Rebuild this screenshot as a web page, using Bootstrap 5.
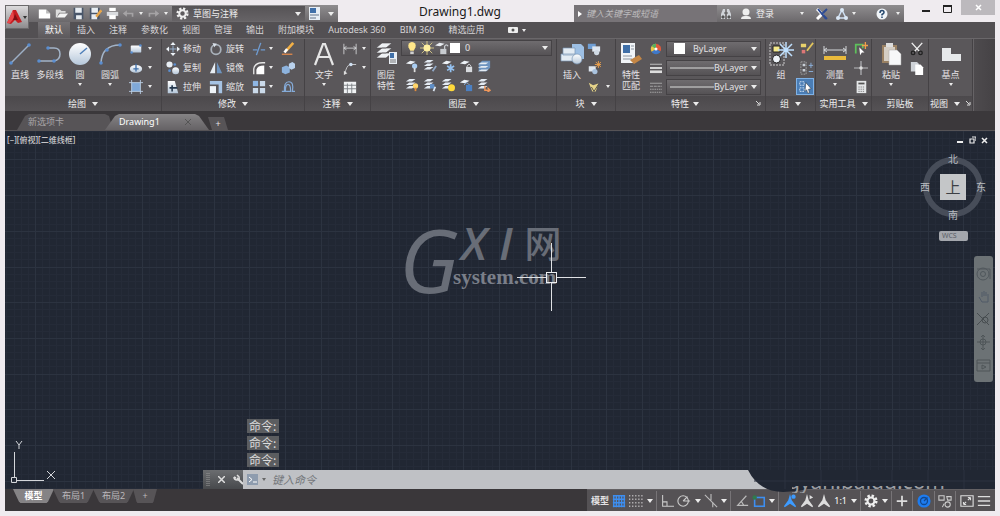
<!DOCTYPE html>
<html lang="zh-CN">
<head>
<meta charset="utf-8">
<meta name="viewport" content="width=device-width, initial-scale=1">
<title>Drawing1.dwg</title>
<link href="https://cdn.jsdelivr.net/npm/bootstrap@5.3.0/dist/css/bootstrap.min.css" rel="stylesheet">
<style>
:root{--ui:"Noto Sans","Noto Sans CJK SC",sans-serif}
body{background:#efebef;font:9px/12px var(--ui);color:#e4e2e4;padding:5px;overflow:hidden}
button,select,input{font:inherit;color:inherit;background:none;border:0;padding:0;margin:0}
svg{display:block;flex:none}
.ic{width:14px;height:14px}
.crt{width:0;height:0;border:2px solid transparent;border-top:3px solid #ececec;border-bottom:0;flex:none}
.crt-l{border-width:3px;border-top-width:4px;border-bottom:0}
/* title bar */
.titlebar{height:17px;color:#111}
.appbtn{width:24px;height:24px;left:0;top:0;z-index:3;background:linear-gradient(#dcdadc,#8d8b8d);border:1px solid #6b696b}
.qat{width:333px;padding-left:29px;background:linear-gradient(#8f8d8f,#6b686b);color:#eee}
.qat .ic{width:13px;height:13px}
.workspace{width:133px;height:15px;background:linear-gradient(#565356,#666366);padding:0 4px}
.workspace select,.combo select{appearance:none;min-width:0}
.doctitle{font-size:12px;line-height:14px;color:#1a1a1a}
.searchwrap{width:143px;background:#777377}
.searchwrap input{font-style:italic;color:#bdbbbd;min-width:0}
.searchwrap input::placeholder,.cmdinput::placeholder{color:inherit;opacity:1}
.signin{width:187px;background:linear-gradient(#8f8d8f,#6b686b);color:#eee;padding-left:3px}
.winctl{width:91px}
.closebtn{width:34px;height:15px;background:#bcb9bd;margin-top:-5px}
/* ribbon */
.rtabs{height:16px;background:#535053;padding-left:33px}
.rtabs a{color:#d6d4d6;text-decoration:none;padding:0 7px;line-height:16px}
.rtabs a.on{background:linear-gradient(#757275,#5c595c);color:#fff}
.ribbon{height:73px;background:linear-gradient(90deg,#5a575a 95%,#454245);border-top:1px solid #6a676a}
.rpanel{border-right:1px solid #454245;box-shadow:1px 0 #666366;background:#5a575a;flex:none}
.rbody{height:57px}
.rfoot{height:15px;background:linear-gradient(#4c494c,#555255);gap:6px;color:#eee}
.big{width:30px;padding-top:2px;display:flex;flex-direction:column;align-items:center;line-height:11px}
.big svg{width:28px;height:26px;margin-bottom:2px}
.big .crt{margin-top:3px}
.trow{height:19px;display:flex;align-items:center;gap:5px;white-space:nowrap}
.tight{gap:8px}
.tight .trow{gap:3px}
.combo{height:16px;background:linear-gradient(#6f6c6f,#555255);border:1px solid #454245;padding:0 3px}
.layers{gap:1px;margin-top:1px}
.layers select{margin-left:4px}
.props .ic{width:12px}
.hot{width:18px;height:17px;background:#4a7db5;border:1px solid #7fb2e6;display:grid;place-items:center}
/* document tabs */
.dtabs{height:20px;background:#3b383b;padding:3px 0 0 12px;border-bottom:1px solid #565356}
.dtab{width:96px;clip-path:polygon(0 100%,8px 12%,12px 0,88px 0,92px 12%,100% 100%);background:#575457;color:#a9a6a9;text-align:left;padding-left:11px}
.dtab.on{width:104px;margin-left:-8px;background:linear-gradient(#858385,#656265);color:#fff;padding:0 18px 0 14px;clip-path:polygon(0 100%,10px 12%,14px 0,90px 0,94px 12%,100% 100%)}
.dplus{width:20px;margin:3px 0 0 -1px;clip-path:polygon(0 0,80% 0,100% 100%,20% 100%);background:#575457}
/* drawing area */
.model{background:#212733;min-height:0}
.abs{position:absolute}
.vlabel{left:2px;top:3px;font-size:8px}
.vctl{right:7px;top:5px;gap:5px}
.mark-g,.mark-x,.mark-s{color:#686d77;line-height:1;white-space:nowrap}
.mark-g{font:italic 500 88px/92px "Open Sans","Noto Sans",sans-serif;left:394px;top:82px}
.mark-x{font:italic 600 46px/46px "Open Sans","Noto Sans",sans-serif;left:456px;top:88px;gap:12px}
.mark-x b{font:500 37px/46px "Noto Sans CJK SC",sans-serif}
.mark-s{font:bold 21px/22px "Liberation Serif",serif;left:448px;top:135px;color:#7a7f89}
.cube{right:9px;top:22px;width:66px;height:70px}
.cube text{font-size:10px;fill:#b9bcc0;text-anchor:middle}
.cube text.up{font-size:15px;fill:#3c3f44}
.wcs{right:27px;top:100px;width:29px;height:10px;background:#a4a7ad;border-radius:2px;color:#5b5e66;font-size:7px;line-height:10px;text-align:left;padding-left:3px}
.viewbar{right:2px;top:125px;width:19px;height:126px;background:#6c7275;border-radius:3px;padding:10px 2px}
.hist{left:242px;bottom:22px;gap:3px;font:12px/14px "Noto Sans CJK SC",sans-serif;color:#dcdcdc}
.hist span{background:#5b5d60;padding:0 3px 0 2px;white-space:nowrap}
.cmdbar{left:198px;right:0;bottom:0;height:19px}
.cmdgrip{width:40px;background:linear-gradient(#6b6d70,#47494c);gap:8px;padding-left:3px}
.cmdfield{width:530px;background:#bfc1c5;padding-left:4px;gap:4px}
.cmdinput{font-size:11px;font-style:italic;color:#74777b;margin-left:2px}
.blob{left:743px;right:0;bottom:-3px;height:22px;z-index:2}
.site{left:787px;right:40px;bottom:-4px;height:7px;overflow:hidden;z-index:3}
.site span{position:absolute;right:10px;bottom:-2px;font:21px/28px "Noto Sans",sans-serif;color:#9d9fa3;white-space:nowrap}
/* status bar */
.sbar{height:22px;background:#3a373a}
.ltab{height:14px;width:41px;margin-right:-1px;background:#575457;color:#bbb8bb;clip-path:polygon(0 0,100% 0,86% 88%,82% 100%,18% 100%,14% 88%)}
.ltab.on{background:#858385;color:#fff;font-weight:700}
.ltab.sm{width:24px}
.stat{width:408px;background:#555255;border-top:1px solid #646164}
.stat svg{width:14px;height:14px}
.stat>*{flex:none}
.sep{width:1px;height:20px;background:#777477}
</style>
</head>
<body class="vh-100 d-flex flex-column">

<svg width="0" height="0" class="position-absolute" aria-hidden="true">
 <defs>
  <linearGradient id="gw" x2="0" y2="1"><stop stop-color="#fff"/><stop offset="1" stop-color="#b5c7da"/></linearGradient>
  <symbol id="rect" viewBox="0 0 16 16"><rect x="2" y="4" width="12" height="8" rx="1" fill="url(#gw)"/><circle cx="3" cy="12" r="1.500" fill="#5b8ed0"/><circle cx="13" cy="4" r="1.500" fill="#5b8ed0"/></symbol>
  <symbol id="ellipse" viewBox="0 0 16 16"><ellipse cx="8" cy="9" rx="7" ry="4.500" fill="url(#gw)"/><path d="M8 3v9M5 9h6" stroke="#3d6ea8" stroke-width="1.500"/></symbol>
  <symbol id="hatch" viewBox="0 0 16 16"><rect x="3" y="3" width="10" height="10" fill="#7fa9d8"/><path d="M3 0v16M13 0v16M0 3h16M0 13h16" stroke="#bcd0e6"/></symbol>
  <symbol id="move" viewBox="0 0 16 16"><path d="M8 0l3 3.500H5zM8 16l3-3.500H5zM0 8l3.500-3v6zM16 8l-3.500-3v6z" fill="#eef3f8"/><path d="M8 4v8M4 8h8" stroke="#9bb8d8"/></symbol>
  <symbol id="rot" viewBox="0 0 16 16"><circle cx="8" cy="8.500" r="5.500" fill="none" stroke="#a9b1ba" stroke-width="2"/><path d="M4 1l5 1-3 4z" fill="#d9e0e8"/></symbol>
  <symbol id="trim" viewBox="0 0 16 16"><path d="M1 9h5M10 9h5M10 1L5 15" stroke="#6f9bd0" stroke-width="1.600"/></symbol>
  <symbol id="erase" viewBox="0 0 16 16"><path d="M14 1L6 10" stroke="#f2b046" stroke-width="3"/><path d="M7 8l-3 4" stroke="#fff" stroke-width="3"/><path d="M1 14h12" stroke="#e0884a" stroke-width="1.500"/></symbol>
  <symbol id="copy" viewBox="0 0 16 16"><circle cx="4" cy="4" r="3.500" fill="#e8eef4"/><circle cx="11" cy="11" r="4" fill="url(#gw)"/><circle cx="10" cy="4" r="1.500" fill="#5b8ed0"/><circle cx="4" cy="11" r="1.500" fill="#5b8ed0"/></symbol>
  <symbol id="mirror" viewBox="0 0 16 16"><path d="M7 1v13H1z" fill="#e8eef4"/><path d="M9 1v13h6z" fill="#6e94bf"/></symbol>
  <symbol id="fillet" viewBox="0 0 16 16"><path d="M2 15V9q1-7 10-7h3" stroke="#e6e6e6" fill="none" stroke-width="1.500"/><path d="M5 15V10q1-5 9-5v10z" fill="#fff"/></symbol>
  <symbol id="explode" viewBox="0 0 16 16"><path d="M1 7l5-2 4 2v6l-5 2-4-2z" fill="#8db3de"/><path d="M9 3l4-2 3 2v5l-4 2-3-2z" fill="#b9d1ec"/></symbol>
  <symbol id="stretch" viewBox="0 0 16 16"><path d="M2 1h8l4 14H2z" fill="url(#gw)"/><path d="M7 6v7M4 9h9" stroke="#23364c" stroke-width="1.800"/></symbol>
  <symbol id="scale" viewBox="0 0 16 16"><path d="M1 1h14v14h-4V5H1z" fill="#a6c3e4"/><rect x="1" y="7" width="7" height="8" fill="#eef3f8"/></symbol>
  <symbol id="array" viewBox="0 0 16 16"><path d="M1 1h6v6H1z" fill="#8eb6e4"/><path d="M9 1h6v6H9zM1 9h6v6H1zM9 9h6v6H9z" fill="#cbdaea"/></symbol>
  <symbol id="offset" viewBox="0 0 16 16"><path d="M1 13h3q-1-11 5-11t4 11h3M5 13q0-8 3-8t3 8z" fill="none" stroke="#85abd8" stroke-width="1.400"/></symbol>
  <symbol id="dim" viewBox="0 0 16 16"><path d="M1 2v12M15 2v12M1 7h14M4 5L1 7l3 2M12 5l3 2-3 2" stroke="#d2d4d6" fill="none"/></symbol>
  <symbol id="leader" viewBox="0 0 16 16"><path d="M2 15Q4 5 8 4h7" stroke="#d2d4d6" fill="none"/><circle cx="9" cy="4" r="2" fill="#cfe0f2"/><path d="M1 11v5l4-2z" fill="#ddd"/></symbol>
  <symbol id="tbl" viewBox="0 0 16 16"><rect x="1" y="2" width="14" height="13" fill="#f0f2f4"/><path d="M1 6h14M1 10h14M5 4v11M10 4v11" stroke="#777b80"/></symbol>
  <symbol id="bulb" viewBox="0 0 16 16"><path d="M8 1a4.500 4.500 0 014 6l-2 4H6L4 7a4.500 4.500 0 014-6z" fill="#ffe68a"/><path d="M6 12h4v3H6z" fill="#cfcfcf"/></symbol>
  <symbol id="sun" viewBox="0 0 16 16"><path d="M8 0v16M0 8h16M2 2l12 12M14 2L2 14" stroke="#dccd8a"/><circle cx="8" cy="8" r="4" fill="#fff0a0"/></symbol>
  <symbol id="lock" viewBox="0 0 16 16"><path d="M0 5l5-3 6 1-5 3z" fill="#e9edf2"/><rect x="6" y="9" width="7" height="6" fill="#c7cbd0"/><path d="M11 9V6q2-3 4 0" fill="none" stroke="#c7cbd0" stroke-width="1.500"/></symbol>
  <symbol id="sheet" viewBox="0 0 16 16"><path d="M1 5l5-3 6 1-5 3z" fill="#edf2f7"/></symbol>
  <symbol id="stack" viewBox="0 0 16 16"><path d="M1 4l4-3h7L8 4zM1 8l4-3h7L8 8zM1 12l4-3h7l-4 3z" fill="#e4ebf3"/></symbol>
  <symbol id="l1" viewBox="0 0 16 16"><use href="#sheet"/><circle cx="11" cy="8" r="3" fill="#a9cdf2"/><path d="M11 10v5" stroke="#ddd" stroke-width="2"/></symbol>
  <symbol id="l2" viewBox="0 0 16 16"><use href="#stack"/><path d="M15 8l-4 6" stroke="#90a8c6" stroke-width="2"/></symbol>
  <symbol id="l3" viewBox="0 0 16 16"><use href="#sheet"/><path d="M11 6v9M7 8l8 5M15 8l-8 5" stroke="#94c1f0" stroke-width="2"/></symbol>
  <symbol id="l4" viewBox="0 0 16 16"><use href="#sheet"/><rect x="8" y="9" width="7" height="6" fill="#d8dade"/><path d="M9 9q2.500-6 5 0" fill="none" stroke="#d8dade"/></symbol>
  <symbol id="l5" viewBox="0 0 16 16"><path d="M2 5l4-3h9v8l-4 4H2z" fill="#6d93bf"/><path d="M1 6l4-2h8l-3 2zM1 10l4-2h8l-3 2zM1 14l4-2h8l-3 2z" fill="#e4ebf3"/></symbol>
  <symbol id="l6" viewBox="0 0 16 16"><use href="#stack"/><circle cx="12" cy="9" r="3" fill="#ffd56b"/><path d="M12 11v4" stroke="#e08c3c" stroke-width="2"/></symbol>
  <symbol id="l7" viewBox="0 0 16 16"><use href="#stack"/><path d="M8 7h5v5H8z" fill="#5f8ec6"/><path d="M14 10l-2 5" stroke="#d9e4f0" stroke-width="2"/></symbol>
  <symbol id="l8" viewBox="0 0 16 16"><use href="#stack"/><circle cx="12" cy="11" r="4" fill="#ffd93b"/></symbol>
  <symbol id="l9" viewBox="0 0 16 16"><use href="#sheet"/><rect x="8" y="8" width="7" height="7" fill="#4c80c2"/><path d="M6 8q2-5 6 0" fill="none" stroke="#8fb6e4"/></symbol>
  <symbol id="l10" viewBox="0 0 16 16"><use href="#stack"/><path d="M9 9v5h6M12 11l3 3-3 2" stroke="#f0975a" stroke-width="1.600" fill="none"/></symbol>
  <symbol id="blk1" viewBox="0 0 16 16"><path d="M1 2h9v6H1z" fill="#6f9ed4"/><path d="M6 5h9v6H6z" fill="#dfe7f0"/><circle cx="11" cy="12" r="3" fill="#d0dae5"/></symbol>
  <symbol id="blk2" viewBox="0 0 16 16"><path d="M2 6h8v6H2z" fill="#dfe7f0"/><circle cx="9" cy="12" r="3" fill="#a9c2de"/><path d="M13 0v8M9 4h7M10 1l6 6M16 1l-6 6" stroke="#f5a54a"/></symbol>
  <symbol id="blk3" viewBox="0 0 16 16"><path d="M2 3l5 3 6-2-3 9H6z" fill="#e6d48a"/><path d="M5 8l3 5 5-8" stroke="#444" fill="none"/></symbol>
  <symbol id="wheel" viewBox="0 0 16 16"><path d="M8 8V1a7 7 0 016 10z" fill="#e05a3c"/><path d="M8 8l6 3.500A7 7 0 012 11.500z" fill="#3f78c9"/><path d="M8 8l-6 3.500A7 7 0 018 1z" fill="#e9c84a"/><path d="M8 8L2 4a7 7 0 016-3z" fill="#58b060"/><circle cx="8" cy="8" r="2" fill="#fff"/></symbol>
  <symbol id="lw" viewBox="0 0 16 16"><path d="M0 3h16" stroke="#ddd"/><path d="M0 8h16" stroke="#ddd" stroke-width="2.500"/><path d="M0 13h16" stroke="#ddd" stroke-width="3.500"/></symbol>
  <symbol id="lt" viewBox="0 0 16 16"><path d="M0 3h16" stroke="#bbb"/><path d="M0 7h16" stroke="#bbb" stroke-dasharray="4 1"/><path d="M0 11h16M0 15h16" stroke="#bbb" stroke-dasharray="2 1"/></symbol>
  <symbol id="g1" viewBox="0 0 16 16"><path d="M1 2h6v4H1z" fill="#e9d26b"/><path d="M2 9h4v4H2z" fill="#d77"/><path d="M15 1L8 10" stroke="#e0c45c" stroke-width="2"/></symbol>
  <symbol id="g2" viewBox="0 0 16 16"><path d="M1 1h6v14H1z" fill="none" stroke="#aaa" stroke-dasharray="2 1"/><path d="M3 3h3v3H3zM3 9h3v3H3z" fill="#c9cfd6"/><path d="M10 5h5M12.500 2v6M10 12h5" stroke="#8fb6e4"/></symbol>
  <symbol id="g3" viewBox="0 0 16 16"><path d="M2 2h5v4H2zM2 9h5v4H2z" fill="none" stroke="#d9e8f8" stroke-dasharray="2 1"/><path d="M9 3l6 7-3 .5 1 4-2 .5-1-4-2 2z" fill="#fff" stroke="#222" stroke-width=".5"/></symbol>
  <symbol id="u1" viewBox="0 0 16 16"><path d="M2 13V3h8v4" fill="none" stroke="#5ec15c" stroke-width="2"/><path d="M6 6l6 6-3 0-2 3z" fill="#fff"/><path d="M13 0v8M9 4h7" stroke="#f0a04a" stroke-width="1.500"/></symbol>
  <symbol id="u2" viewBox="0 0 16 16"><path d="M8 0v16M0 8h16" stroke="#b9bbbe" stroke-width="1.300"/><circle cx="8" cy="8" r="2" fill="#ddd"/></symbol>
  <symbol id="u3" viewBox="0 0 16 16"><rect x="3" y="1" width="11" height="14" fill="#e4e6e8"/><path d="M5 4h7" stroke="#555" stroke-width="2"/><path d="M5 8h7M5 10.500h7M5 13h7" stroke="#777" stroke-dasharray="1.500 1"/></symbol>
  <symbol id="cut" viewBox="0 0 16 16"><path d="M2 1l9 10M14 1L5 11" stroke="#eee" stroke-width="1.600"/><circle cx="3.500" cy="12.500" r="2" fill="none" stroke="#222" stroke-width="1.500"/><circle cx="12" cy="12.500" r="2" fill="none" stroke="#222" stroke-width="1.500"/></symbol>
  <symbol id="cp" viewBox="0 0 16 16"><path d="M1 1h7l2 2v9H1z" fill="#cfd3d8"/><path d="M6 4h6l3 3v9H6z" fill="#fff"/></symbol>
  <symbol id="gear" viewBox="0 0 16 16"><circle cx="8" cy="8" r="6" fill="none" stroke="#eee" stroke-width="3" stroke-dasharray="2.700 2"/><circle cx="8" cy="8" r="4" fill="none" stroke="#eee" stroke-width="2.500"/></symbol>
  <symbol id="man" viewBox="0 0 16 16"><path d="M8 0l2 7 5 7-1 1-6-4-6 4-1-1 5-7z" fill="currentColor"/></symbol>
 </defs>
</svg>

<header class="position-relative">
 <button class="appbtn position-absolute d-flex align-items-center" aria-label="应用程序菜单">
  <svg width="17" height="20" viewBox="0 0 17 20"><path d="M1 16L7 3h3l6 12-4 1-3-3-4 4z" fill="#c41e22"/><path d="M7 3l1 8-4 5H1z" fill="#e8474a"/><path d="M9 7l3 6H7z" fill="#7d1013"/></svg>
  <span class="crt" style="border-top-color:#333"></span>
 </button>
 <div class="titlebar d-flex">
  <div class="qat d-flex align-items-center flex-shrink-0">
   <div class="d-flex align-items-center flex-fill justify-content-between pe-1 ps-1">
    <svg class="ic" viewBox="0 0 16 16"><path d="M1 3h9l5 5v6H1z" fill="#fff"/><path d="M10 3v5h5" fill="#bbb"/></svg>
    <svg class="ic" viewBox="0 0 16 16"><path d="M1 3h5l2 2h5v2H5l-3 6H1z" fill="#ddd"/><path d="M6 8h10l-4 5H2z" fill="#f4f4f4"/></svg>
    <svg class="ic" viewBox="0 0 16 16"><path d="M2 1h12v14H2z" fill="#49566a"/><path d="M4 1h8v6H4zM5 10h7v5H5z" fill="#e8edf2"/></svg>
    <svg class="ic" viewBox="0 0 16 16"><path d="M1 1h12v14H1z" fill="#49566a"/><path d="M3 1h8v6H3zM3 9h7v6H3z" fill="#e8edf2"/><path d="M15 4l-6 8" stroke="#e8a64a" stroke-width="3"/></svg>
    <svg class="ic" viewBox="0 0 16 16"><path d="M4 1h8v4H4z" fill="#fff"/><path d="M1 6h14v5H1z" fill="#d9dbde"/><path d="M4 10h8v5H4z" fill="#fff"/></svg>
    <svg class="ic" viewBox="0 0 16 16"><path d="M1 8l5-4v3h8v5h-2V9H6v3z" fill="#a5a3a5"/></svg><span class="crt"></span>
    <svg class="ic" viewBox="0 0 16 16"><path d="M15 8l-5-4v3H2v5h2V9h6v3z" fill="#a5a3a5"/></svg><span class="crt"></span>
   </div>
   <div class="workspace d-flex align-items-center gap-1">
    <svg class="ic"><use href="#gear"/></svg>
    <select class="flex-fill" aria-label="工作空间"><option>草图与注释</option></select>
    <span class="crt crt-l"></span>
   </div>
   <svg class="mx-1" width="11" height="13" viewBox="0 0 11 13"><path d="M0 0h11v13H0z" fill="#e6edf4"/><path d="M1 1h6v5H1z" fill="#3f6fa8"/><path d="M1 8h9M1 11h6" stroke="#64748a"/></svg>
   <span class="crt crt-l mx-1"></span>
  </div>
  <div class="doctitle flex-fill text-center ps-2">Drawing1.dwg</div>
  <div class="searchwrap d-flex align-items-center flex-shrink-0 gap-1 ps-1">
   <svg width="4" height="6" viewBox="0 0 4 6"><path d="M0 0l4 3-4 3z" fill="#fff"/></svg>
   <input class="flex-fill" type="search" placeholder="键入关键字或短语" aria-label="搜索">
  </div>
  <div class="signin d-flex align-items-center flex-shrink-0 gap-1">
   <svg width="12" height="12" viewBox="0 0 12 12"><path d="M1 11V6l2-5h2v10zM7 11V1h2l2 5v5z" fill="#cfd3d8"/><path d="M2 8h2v2H2zM8 8h2v2H8zM4 5h4" stroke="#555" fill="#555"/></svg>
   <svg class="ms-1" width="12" height="12" viewBox="0 0 12 12"><circle cx="6" cy="4" r="3.500" fill="#eee"/><path d="M1 11q0-3 4-3h2q4 0 4 3z" fill="#eee"/></svg>
   <button class="flex-fill text-start">登录</button>
   <span class="crt me-1"></span>
   <svg class="ms-1" width="12" height="12" viewBox="0 0 12 12"><path d="M1 1l5 5-5 5" fill="none" stroke="#fff" stroke-width="3"/><path d="M11 1L6 6l5 5M2 1l8 10" fill="none" stroke="#2d4b93" stroke-width="2"/></svg>
   <svg class="ms-1" width="12" height="12" viewBox="0 0 12 12"><path d="M6 2l4 8H2z" fill="none" stroke="#cfe0f4" stroke-width="1.500"/><circle cx="6" cy="2" r="2" fill="#dbe8f6"/><circle cx="2" cy="10" r="2" fill="#dbe8f6"/><circle cx="10" cy="10" r="2" fill="#dbe8f6"/></svg>
   <span class="crt"></span>
   <svg class="ms-3" width="12" height="12" viewBox="0 0 12 12"><circle cx="6" cy="6" r="5.500" fill="#f0f4f8"/><path d="M4 5q0-2.500 2-2.500T8 4.500Q8 5.500 6 6.500v1M6 8.500v1.500" stroke="#27496f" stroke-width="1.500" fill="none"/></svg>
   <span class="crt mx-1"></span>
  </div>
  <div class="winctl d-flex justify-content-end align-items-start flex-shrink-0">
   <button aria-label="最小化"><svg width="9" height="8" viewBox="0 0 9 8"><path d="M0 6h8" stroke="#222" stroke-width="2"/></svg></button>
   <button class="mx-2 ps-1" aria-label="最大化"><svg width="10" height="8" viewBox="0 0 10 8"><path d="M.5 1v6.500h8V1" fill="none" stroke="#222"/><path d="M0 1h9" stroke="#222" stroke-width="2"/></svg></button>
   <button class="closebtn d-flex justify-content-center align-items-end pb-1" aria-label="关闭"><svg width="7" height="7" viewBox="0 0 7 7"><path d="M1 1l5 5M6 1L1 6" stroke="#fff" stroke-width="1.500"/></svg></button>
  </div>
 </div>
 <nav class="rtabs d-flex">
  <a class="on" href="#">默认</a><a href="#">插入</a><a href="#">注释</a><a href="#">参数化</a><a href="#">视图</a><a href="#">管理</a><a href="#">输出</a><a href="#">附加模块</a><a href="#">Autodesk 360</a><a href="#">BIM 360</a><a href="#">精选应用</a>
  <button class="d-flex align-items-center gap-1 ms-3" aria-label="最小化功能区"><svg width="10" height="6" viewBox="0 0 10 6"><rect width="10" height="6" rx="1" fill="#eee"/><circle cx="5" cy="3" r="1.500" fill="#555"/></svg><span class="crt"></span></button>
 </nav>
</header>

<section class="ribbon d-flex">
 <div class="rpanel" style="width:157px">
  <div class="rbody d-flex">
   <button class="big"><svg viewBox="0 0 28 26"><path d="M5 22L23 4" stroke="#9db0c6" stroke-width="1.500"/><circle cx="5" cy="22" r="1.800" fill="#5b8ed0"/><circle cx="23" cy="4" r="1.800" fill="#5b8ed0"/></svg>直线</button>
   <button class="big"><svg viewBox="0 0 28 26"><path d="M3 20h15q6-1 6-7t-6-6h-5" fill="none" stroke="#a3b4c8" stroke-width="1.500"/><circle cx="3" cy="20" r="1.800" fill="#5b8ed0"/><circle cx="18" cy="20" r="1.800" fill="#5b8ed0"/><circle cx="12" cy="7" r="1.800" fill="#5b8ed0"/></svg>多段线</button>
   <button class="big"><svg viewBox="0 0 28 26"><circle cx="14" cy="13" r="11" fill="url(#gw)"/><path d="M14 13l7-6" stroke="#4f7fb9" stroke-width="1.500"/></svg>圆<span class="crt"></span></button>
   <button class="big"><svg viewBox="0 0 28 26"><path d="M5 22Q6 4 24 4" fill="none" stroke="#a3b4c8" stroke-width="1.500"/><circle cx="5" cy="22" r="1.800" fill="#5b8ed0"/><circle cx="11" cy="9" r="1.800" fill="#5b8ed0"/><circle cx="24" cy="4" r="1.800" fill="#5b8ed0"/></svg>圆弧<span class="crt"></span></button>
   <div class="ps-1">
    <div class="trow"><svg class="ic"><use href="#rect"/></svg><span class="crt"></span></div>
    <div class="trow"><svg class="ic"><use href="#ellipse"/></svg><span class="crt"></span></div>
    <div class="trow"><svg class="ic"><use href="#hatch"/></svg><span class="crt"></span></div>
   </div>
  </div>
  <div class="rfoot d-flex align-items-center justify-content-center">绘图<span class="crt crt-l"></span></div>
 </div>

 <div class="rpanel" style="width:143px">
  <div class="rbody tight d-flex ps-1">
   <div>
    <div class="trow"><svg class="ic"><use href="#move"/></svg>移动</div>
    <div class="trow"><svg class="ic"><use href="#copy"/></svg>复制</div>
    <div class="trow"><svg class="ic"><use href="#stretch"/></svg>拉伸</div>
   </div>
   <div>
    <div class="trow"><svg class="ic"><use href="#rot"/></svg>旋转</div>
    <div class="trow"><svg class="ic"><use href="#mirror"/></svg>镜像</div>
    <div class="trow"><svg class="ic"><use href="#scale"/></svg>缩放</div>
   </div>
   <div>
    <div class="trow"><svg class="ic"><use href="#trim"/></svg><span class="crt"></span></div>
    <div class="trow"><svg class="ic"><use href="#fillet"/></svg><span class="crt"></span></div>
    <div class="trow"><svg class="ic"><use href="#array"/></svg><span class="crt"></span></div>
   </div>
   <div>
    <div class="trow"><svg class="ic"><use href="#erase"/></svg></div>
    <div class="trow"><svg class="ic"><use href="#explode"/></svg></div>
    <div class="trow"><svg class="ic"><use href="#offset"/></svg></div>
   </div>
  </div>
  <div class="rfoot d-flex align-items-center justify-content-center">修改<span class="crt crt-l"></span></div>
 </div>

 <div class="rpanel" style="width:66px">
  <div class="rbody d-flex ps-1 gap-1">
   <button class="big"><svg viewBox="0 0 28 26"><path d="M5 24L13 3h2l8 21M8 16h12" fill="none" stroke="#e6e6e6" stroke-width="2.200"/></svg>文字<span class="crt"></span></button>
   <div>
    <div class="trow"><svg class="ic"><use href="#dim"/></svg><span class="crt"></span></div>
    <div class="trow"><svg class="ic"><use href="#leader"/></svg><span class="crt"></span></div>
    <div class="trow"><svg class="ic"><use href="#tbl"/></svg></div>
   </div>
  </div>
  <div class="rfoot d-flex align-items-center justify-content-center">注释<span class="crt crt-l"></span></div>
 </div>

 <div class="rpanel" style="width:186px">
  <div class="rbody d-flex">
   <button class="big"><svg viewBox="0 0 28 26"><path d="M4 7l6-5h10l-6 5zM4 12l6-5h10l-6 5zM4 17l6-5h10l-6 5z" fill="#eef1f4" stroke="#4a474a" stroke-width=".6"/><path d="M17 11h8v12h-8z" fill="#e8eef5"/><path d="M18 12h4v5h-4z" fill="#3f6fa8"/><path d="M18 19h6M18 21h6" stroke="#777"/></svg>图层<br>特性</button>
   <div class="flex-fill pe-1">
    <div class="combo layers d-flex align-items-center">
     <svg class="ic"><use href="#bulb"/></svg><svg class="ic"><use href="#sun"/></svg><svg class="ic"><use href="#lock"/></svg>
     <svg width="10" height="10" viewBox="0 0 10 10"><rect width="10" height="10" fill="#fff"/></svg>
     <select class="flex-fill" aria-label="图层"><option>0</option></select><span class="crt crt-l"></span>
    </div>
    <div class="trow gap-1 ps-1"><svg class="ic"><use href="#l1"/></svg><svg class="ic"><use href="#l2"/></svg><svg class="ic"><use href="#l3"/></svg><svg class="ic"><use href="#l4"/></svg><svg class="ic"><use href="#l5"/></svg></div>
    <div class="trow gap-1 ps-1"><svg class="ic"><use href="#l6"/></svg><svg class="ic"><use href="#l7"/></svg><svg class="ic"><use href="#l8"/></svg><svg class="ic"><use href="#l9"/></svg><svg class="ic"><use href="#l10"/></svg></div>
   </div>
  </div>
  <div class="rfoot d-flex align-items-center justify-content-center">图层<span class="crt crt-l"></span></div>
 </div>

 <div class="rpanel" style="width:59px">
  <div class="rbody d-flex">
   <button class="big"><svg viewBox="0 0 28 26"><path d="M14 3h9l3 3v12H14z" fill="#9dbfe4"/><path d="M5 7h12v7H5zM3 13h14v7H3z" fill="#e3ebf3" stroke="#7895b5" stroke-width=".7"/><circle cx="19" cy="18" r="5" fill="url(#gw)" stroke="#7895b5" stroke-width=".7"/></svg>插入</button>
   <div>
    <div class="trow"><svg class="ic"><use href="#blk1"/></svg></div>
    <div class="trow"><svg class="ic"><use href="#blk2"/></svg></div>
    <div class="trow"><svg class="ic"><use href="#blk3"/></svg><span class="crt"></span></div>
   </div>
  </div>
  <div class="rfoot d-flex align-items-center justify-content-center">块<span class="crt crt-l"></span></div>
 </div>

 <div class="rpanel" style="width:150px">
  <div class="rbody props d-flex">
   <button class="big"><svg viewBox="0 0 28 26"><path d="M4 2h14v20H4z" fill="#f1f4f7"/><path d="M6 4h7v8H6z" fill="#3f6fa8"/><path d="M14 5h3M14 8h3M6 15h9M6 18h9" stroke="#8a94a0"/><path d="M13 19l9-5 3 4-8 5z" fill="#c48645"/></svg>特性<br>匹配</button>
   <div class="px-1 flex-shrink-0 me-n1">
    <div class="trow"><svg class="ic"><use href="#wheel"/></svg></div>
    <div class="trow"><svg class="ic"><use href="#lw"/></svg></div>
    <div class="trow"><svg class="ic"><use href="#lt"/></svg></div>
   </div>
   <div class="flex-fill me-1">
    <div class="trow"><div class="combo d-flex align-items-center gap-2 flex-fill"><svg class="ms-1" width="11" height="11" viewBox="0 0 11 11"><rect width="11" height="11" fill="#fff"/></svg><select class="flex-fill" aria-label="颜色"><option>ByLayer</option></select><span class="crt crt-l"></span></div></div>
    <div class="trow"><div class="combo d-flex align-items-center flex-fill"><svg width="44" height="2" viewBox="0 0 44 2"><path d="M0 1h44" stroke="#ddd"/></svg><select class="flex-fill" aria-label="线宽"><option>ByLayer</option></select><span class="crt crt-l"></span></div></div>
    <div class="trow"><div class="combo d-flex align-items-center flex-fill"><svg width="44" height="2" viewBox="0 0 44 2"><path d="M0 1h44" stroke="#ddd"/></svg><select class="flex-fill" aria-label="线型"><option>ByLayer</option></select><span class="crt crt-l"></span></div></div>
   </div>
  </div>
  <div class="rfoot d-flex align-items-center px-1"><span class="flex-fill d-flex align-items-center justify-content-center gap-1">特性<span class="crt crt-l"></span></span><svg width="5" height="5" viewBox="0 0 5 5"><path d="M0 0l3 3M4 1v3H1" stroke="#ddd" fill="none"/></svg></div>
 </div>

 <div class="rpanel" style="width:50px">
  <div class="rbody d-flex">
   <button class="big"><svg viewBox="0 0 28 26"><path d="M3 2h14v22H3z" fill="none" stroke="#ccc" stroke-dasharray="2 1"/><path d="M6 5h7v6H6z" fill="#f4e98c" stroke="#222"/><circle cx="9.500" cy="18" r="4" fill="#eef3f8" stroke="#222"/><path d="M19 1v16M11 9h16M13 3l12 12M25 3L13 15" stroke="#bfe0ff" stroke-width="1.500"/></svg>组</button>
   <div>
    <div class="trow ps-1"><svg class="ic"><use href="#g1"/></svg></div>
    <div class="trow ps-1"><svg class="ic"><use href="#g2"/></svg></div>
    <div class="trow"><span class="hot"><svg class="ic"><use href="#g3"/></svg></span></div>
   </div>
  </div>
  <div class="rfoot d-flex align-items-center justify-content-center">组<span class="crt crt-l"></span></div>
 </div>

 <div class="rpanel" style="width:56px">
  <div class="rbody d-flex ps-1">
   <button class="big"><svg viewBox="0 0 28 26"><path d="M3 5v8M25 5v8M3 9h22M6 7L3 9l3 2M22 7l3 2-3 2" stroke="#d5d8da" fill="none"/><path d="M3 15h22v4H3z" fill="#eaba3c"/></svg>测量<span class="crt"></span></button>
   <div class="ps-1">
    <div class="trow"><svg class="ic"><use href="#u1"/></svg></div>
    <div class="trow"><svg class="ic"><use href="#u2"/></svg></div>
    <div class="trow"><svg class="ic"><use href="#u3"/></svg></div>
   </div>
  </div>
  <div class="rfoot d-flex align-items-center justify-content-center">实用工具<span class="crt crt-l"></span></div>
 </div>

 <div class="rpanel" style="width:57px">
  <div class="rbody d-flex ps-1 gap-1">
   <button class="big"><svg viewBox="0 0 28 26"><path d="M5 4h15v18H5z" fill="#9a8163"/><path d="M7 6h11v14H7z" fill="#d5cec4"/><path d="M9 2h7v4H9z" fill="#ddd"/><path d="M12 9h8l4 4v11H12z" fill="#f7f8f9" stroke="#aaa" stroke-width=".5"/></svg>粘贴<span class="crt"></span></button>
   <div>
    <div class="trow"><svg class="ic"><use href="#cut"/></svg></div>
    <div class="trow"><svg class="ic"><use href="#cp"/></svg></div>
   </div>
  </div>
  <div class="rfoot d-flex align-items-center justify-content-center">剪贴板</div>
 </div>

 <div class="rpanel" style="width:44px">
  <div class="rbody d-flex justify-content-center">
   <button class="big"><svg viewBox="0 0 28 26"><path d="M5 7h9v6h10v7H5z" fill="#e6e8ea"/></svg>基点<span class="crt"></span></button>
  </div>
  <div class="rfoot d-flex align-items-center justify-content-center">视图<span class="crt crt-l"></span><svg width="5" height="5" viewBox="0 0 5 5"><path d="M0 0l3 3M4 1v3H1" stroke="#ddd" fill="none"/></svg></div>
 </div>
</section>

<nav class="dtabs d-flex">
 <button class="dtab">新选项卡</button>
 <button class="dtab on d-flex align-items-center justify-content-between">Drawing1<svg width="6" height="6" viewBox="0 0 6 6"><path d="M0 0l6 6M6 0L0 6" stroke="#555"/></svg></button>
 <button class="dplus">+</button>
</nav>

<main class="model flex-fill position-relative">
 <svg class="abs w-100 h-100" aria-hidden="true">
  <defs><pattern id="grid" x="30" y="314" width="357" height="357" patternUnits="userSpaceOnUse"><path id="minor" stroke="#252b38" fill="none"/><path id="major" stroke="#2c3340" fill="none"/></pattern></defs>
  <rect width="100%" height="100%" fill="url(#grid)"/>
 </svg>
 <div class="abs vlabel">[−][俯视][二维线框]</div>
 <div class="abs vctl d-flex">
  <svg width="7" height="8" viewBox="0 0 7 8"><path d="M0 6h6" stroke="#eee" stroke-width="2"/></svg>
  <svg width="7" height="8" viewBox="0 0 7 8"><path d="M1 3h4v4H1zM3 1h4v4" fill="none" stroke="#eee" stroke-width="1.200"/></svg>
  <svg width="7" height="8" viewBox="0 0 7 8"><path d="M1 2l5 5M6 2L1 7" stroke="#eee" stroke-width="1.500"/></svg>
 </div>

 <div class="abs mark-g">G</div>
 <div class="abs mark-x d-flex"><span>X</span><span>I</span><b>网</b></div>
 <div class="abs mark-s">system.com</div>
 <svg class="abs" style="left:512px;top:112px" width="70" height="70" viewBox="0 0 70 70"><path d="M34.500 0v29M34.500 40v28M0 34.500h29M40 34.500h29" stroke="#dfe1e4"/><rect x="29.500" y="29.500" width="10" height="10" fill="none" stroke="#eceef0"/></svg>

 <svg class="abs cube" viewBox="0 0 66 70"><circle cx="33" cy="34" r="27" fill="none" stroke="#474d59" stroke-width="6"/><rect x="20" y="21" width="26" height="26" fill="#c4c6c8"/><text class="up" x="33" y="40">上</text><text x="33" y="10">北</text><text x="33" y="66">南</text><text x="5" y="38">西</text><text x="61" y="38">东</text></svg>
 <button class="abs wcs">WCS</button>
 <div class="abs viewbar d-flex flex-column align-items-center justify-content-between">
  <svg width="15" height="15" viewBox="0 0 15 15" fill="none" stroke="#50575c"><circle cx="7" cy="8" r="6"/><circle cx="7" cy="8" r="2.500"/><path d="M1 3h13v10"/></svg>
  <svg width="15" height="15" viewBox="0 0 15 15" fill="none" stroke="#505a68"><path d="M3 8l3 5h6V5M6 8V3M8 7V2M10 7V3"/></svg>
  <svg width="15" height="15" viewBox="0 0 15 15" fill="none" stroke="#474d50"><path d="M1 1l12 12M13 1L1 13"/><circle cx="9" cy="8" r="3"/></svg>
  <svg width="15" height="17" viewBox="0 0 15 17" fill="none" stroke="#4e5558"><path d="M7 1v15M1 8h13M5 3l2-2 2 2M5 14l2 2 2-2"/><circle cx="7" cy="8" r="3"/></svg>
  <svg width="15" height="13" viewBox="0 0 15 13" fill="none" stroke="#4e5558"><path d="M1 1h13v11H1zM1 4h13M6 6l4 2-4 2z"/></svg>
 </div>

 <svg class="abs" style="left:6px;bottom:4px" width="46" height="46" viewBox="0 0 46 46" fill="none" stroke="#d4d6da"><path d="M3.500 13v25M6 41.500h27"/><path d="M.5 38.500h5v5h-5z"/><path d="M5 2l3 4 3-4M8 6v4M36 32l8 8M44 32l-8 8"/></svg>

 <div class="abs hist d-flex flex-column"><span>命令:</span><span>命令:</span><span>命令:</span></div>
 <div class="abs cmdbar d-flex">
  <div class="cmdgrip d-flex align-items-center flex-shrink-0">
   <svg width="4" height="14" viewBox="0 0 4 14"><path d="M1 0v14M3 0v14" stroke="#999" stroke-dasharray="1 1"/></svg>
   <svg width="7" height="7" viewBox="0 0 7 7"><path d="M0 0l7 7M7 0L0 7" stroke="#ddd" stroke-width="1.500"/></svg>
   <svg width="11" height="11" viewBox="0 0 11 11"><path d="M10 10L4 4" stroke="#ddd" stroke-width="2"/><path d="M1 3q0 3 3 3t2-3L4 1M1 3l2 1" stroke="#ddd" stroke-width="1.500" fill="none"/></svg>
  </div>
  <div class="cmdfield d-flex align-items-center">
   <svg width="11" height="11" viewBox="0 0 11 11"><rect width="11" height="11" fill="#8e9cae"/><path d="M2 3l3 2.500L2 8M6 8h4" stroke="#fff" fill="none"/></svg><span class="crt" style="border-top-color:#666"></span>
   <input class="cmdinput flex-fill" type="text" placeholder="键入命令" aria-label="命令行">
  </div>
 </div>
 <svg class="abs blob" width="247" height="22" viewBox="0 0 247 22"><path d="M0 0h247v19H60q-12 3-25 3Q11 22 0 0z" fill="#212733"/><path d="M37 0v19M73 0v19M109 0v19M144 0v19M180 0v19M216 0v19M6 11h241" stroke="#2c3340"/></svg>
 <div class="abs site"><span>jingyan.baidu.com</span></div>
</main>

<footer class="sbar d-flex justify-content-between">
 <div class="d-flex ps-1 ms-1">
  <button class="ltab on">模型</button><button class="ltab">布局1</button><button class="ltab">布局2</button><button class="ltab sm">+</button>
 </div>
 <div class="stat d-flex align-items-center justify-content-between px-1">
  <b>模型</b>
  <svg viewBox="0 0 16 16"><path d="M2 1v14M5 1v14M8 1v14M11 1v14M14 1v14M1 2h14M1 6h14M1 10h14M1 14h14" stroke="#3d8ef0" stroke-width="1.600"/></svg>
  <svg viewBox="0 0 16 16"><path d="M0 2h16M0 6h16M0 10h16M0 14h16" stroke="#b5b3b5" stroke-width="1.500" stroke-dasharray="1.500 2"/></svg>
  <span class="crt crt-l"></span><span class="sep"></span>
  <svg viewBox="0 0 16 16"><path d="M3 1v13h13M3 9h5v5" fill="none" stroke="#ccc" stroke-width="1.200"/></svg>
  <svg viewBox="0 0 16 16"><circle cx="7" cy="8" r="6" fill="none" stroke="#ccc" stroke-width="1.300"/><path d="M7 8h8M7 8l5-5" stroke="#ccc" stroke-width="1.300"/></svg>
  <span class="crt crt-l"></span>
  <svg viewBox="0 0 16 16"><path d="M1 1l14 14M8 0v7M10 15V9" stroke="#bbb" stroke-width="1.300"/></svg>
  <span class="crt crt-l"></span><span class="sep"></span>
  <svg viewBox="0 0 16 16"><path d="M13 2L3 13h12M7 8l3 5" fill="none" stroke="#bbb" stroke-width="1.300"/></svg>
  <svg viewBox="0 0 16 16"><rect x="3" y="4" width="11" height="10" fill="none" stroke="#3d8ef0" stroke-width="1.800"/><circle cx="3" cy="4" r="2.500" fill="#2f7a4c"/></svg>
  <span class="crt crt-l"></span><span class="sep"></span>
  <svg viewBox="0 0 16 16" color="#3d9bff"><use href="#man"/><circle cx="12" cy="3" r="2.500" fill="#3d9bff"/></svg>
  <svg viewBox="0 0 16 16" color="#ddd"><use href="#man"/><path d="M11 1l4 3-4 2z" fill="#ddd"/></svg>
  <svg viewBox="0 0 16 16" color="#ddd"><use href="#man"/></svg>
  <span class="d-flex align-items-center gap-1 text-white">1:1<span class="crt crt-l"></span></span><span class="sep"></span>
  <svg viewBox="0 0 16 16"><use href="#gear"/></svg><span class="crt crt-l"></span><span class="sep"></span>
  <svg viewBox="0 0 16 16"><path d="M8 2v12M2 8h12" stroke="#ddd" stroke-width="2"/></svg><span class="sep"></span>
  <svg viewBox="0 0 16 16"><circle cx="8" cy="8" r="7.500" fill="#1d7cf0"/><circle cx="8" cy="8" r="4" fill="none" stroke="#12488e" stroke-width="1.500"/><path d="M8 8l4-4" stroke="#12488e" stroke-width="1.500"/></svg><span class="sep"></span>
  <svg viewBox="0 0 16 16" fill="none" stroke="#ccc" stroke-width="1.200"><path d="M1 2h6v5H1zM7 11l-2 4M10 3h5v4h-4z"/><circle cx="11" cy="12" r="3"/></svg><span class="sep"></span>
  <svg viewBox="0 0 16 16" fill="none" stroke="#ddd" stroke-width="1.300"><path d="M1 2h14v12H1zM9 7l3-3M12 4H9M12 4v3M4 12l3-3M4 12h3M4 12V9"/></svg>
  <svg viewBox="0 0 16 16"><path d="M1 3h14M1 8h14M1 13h14" stroke="#ddd" stroke-width="1.500"/></svg>
 </div>
</footer>

<script src="https://cdn.jsdelivr.net/npm/bootstrap@5.3.0/dist/js/bootstrap.bundle.min.js"></script>
<script>
// 357px tile: 10 major cells, 5 minor cells in each
function lines(n){
  let d='';
  for(let i=0;i<n;i++){const p=Math.round(i*357/n)+.5;d+=`M${p} 0V357M0 ${p}H357`}
  return d;
}
document.getElementById('minor').setAttribute('d',lines(50));
document.getElementById('major').setAttribute('d',lines(10));
</script>
</body>
</html>
